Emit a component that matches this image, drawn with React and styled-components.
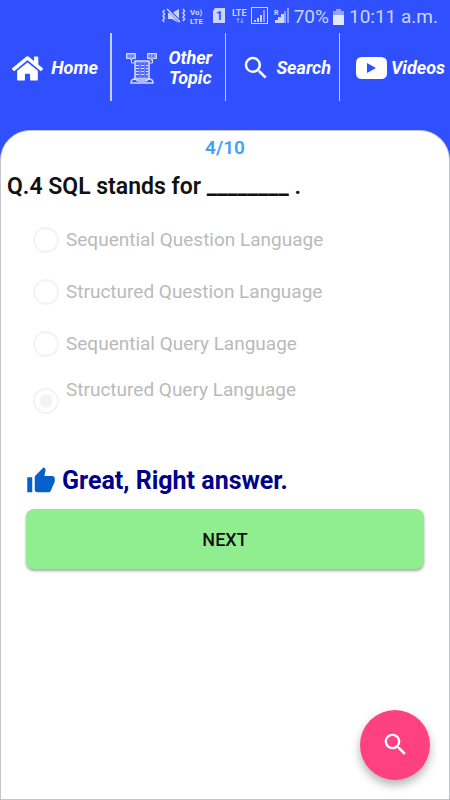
import { useState } from "react";
import styled, { createGlobalStyle } from "styled-components";
import { FaHome } from "react-icons/fa";
import { MdSearch, MdThumbUp } from "react-icons/md";

const GlobalStyle = createGlobalStyle`
  * {
    box-sizing: border-box;
  }

  body {
    margin: 0;
    background: #304ffe;
    font-family: Roboto, "Liberation Sans", sans-serif;
  }
`;

const Page = styled.div`
  display: flex;
  flex-direction: column;
  min-height: 100vh;
  background: #304ffe;
`;

const StatusBar = styled.div`
  display: flex;
  justify-content: flex-end;
  align-items: center;
  height: 33px;
  padding-right: 12px;
  color: #ccd4ff;
`;

const StatusIcons = styled.svg`
  width: 132px;
  height: 33px;
  font-family: Roboto, "Liberation Sans", sans-serif;
  font-weight: 700;
`;

const StatusText = styled.span`
  font-size: 19px;
  line-height: 33px;
  white-space: nowrap;
`;

const Battery = styled.svg`
  width: 11px;
  height: 16px;
  margin: 0 5px 0 4px;
`;

const Nav = styled.nav`
  display: grid;
  grid-template-columns: 112fr 114fr 114fr 110fr;
  height: 68px;
  margin-bottom: 29px;
`;

const NavLink = styled.a`
  display: flex;
  align-items: center;
  justify-content: flex-end;
  gap: ${({ $gap }) => $gap || 8}px;
  padding-top: 2px;
  padding-right: ${({ $end }) => $end}px;
  border-right: ${({ $line }) => $line || 0}px solid #c5ceff;
  color: #fff;
  font-size: 18px;
  font-style: italic;
  font-weight: 700;
  line-height: 20px;
  text-align: center;
  text-decoration: none;

  svg {
    flex-shrink: 0;
  }
`;

const Card = styled.main`
  flex: 1;
  display: flex;
  flex-direction: column;
  padding: 7px 0 0;
  border: 1px solid #c4c4cc;
  border-radius: 30px 30px 0 0;
  background: #fff;
`;

const Counter = styled.div`
  color: #42a0f5;
  font-size: 19px;
  font-weight: 600;
  line-height: 20px;
  text-align: center;
`;

const Question = styled.h1`
  margin: 14px 6px 0;
  color: #111;
  font-size: 23px;
  font-weight: 600;
  line-height: 30px;
`;

const Options = styled.fieldset`
  display: flex;
  flex-direction: column;
  margin: 12px 32px 0;
  padding: 0;
  border: 0;
`;

const Option = styled.label`
  display: flex;
  align-items: ${({ $raised }) => ($raised ? "flex-end" : "center")};
  gap: 7px;
  height: ${({ $raised }) => ($raised ? 44 : 52)}px;
  color: #bababa;
  font-size: 19px;
  line-height: 24px;
`;

const OptionText = styled.span`
  align-self: ${({ $raised }) => ($raised ? "flex-start" : "auto")};
  padding-top: ${({ $raised }) => ($raised ? 8 : 0)}px;
`;

const Radio = styled.input`
  appearance: none;
  flex-shrink: 0;
  width: 26px;
  height: 26px;
  margin: 0;
  border: 2px solid #f3f3f3;
  border-radius: 50%;
  background: #fff;

  &:checked {
    background: radial-gradient(circle, #f3f3f3 6px, #fff 7px);
  }
`;

const Feedback = styled.p`
  display: flex;
  align-items: center;
  gap: 6px;
  margin: 50px 25px 0;
  color: #00008b;
  font-size: 25px;
  font-weight: 700;
  line-height: 34px;

  svg {
    color: #0560cb;
  }
`;

const NextButton = styled.button`
  height: 60px;
  margin: 11px 25px 0;
  border: 0;
  border-radius: 8px;
  background: #90ee90;
  box-shadow: 0 2px 3px rgba(0, 0, 0, 0.35);
  color: #111;
  font-family: inherit;
  font-size: 18px;
  font-weight: 500;
`;

const SearchFab = styled.button`
  position: fixed;
  right: 20px;
  bottom: 20px;
  display: flex;
  align-items: center;
  justify-content: center;
  width: 70px;
  height: 70px;
  padding: 0 0 2px;
  border: 0;
  border-radius: 50%;
  background: #ff4081;
  box-shadow: 0 5px 10px rgba(0, 0, 0, 0.3);
  color: #fff;
`;

const PhoneIcons = () => (
  <StatusIcons viewBox="162 0 132 33" fill="#ccd4ff" aria-hidden="true">
    <path d="M168 13h4l7-4v14l-7-4h-4z" />
    <path d="M167 8l14 15" fill="none" stroke="#304ffe" strokeWidth="3" />
    <path
      d="M167 9l13 13M164.500 10l-1.500 2 1.500 2-1.500 2 1.500 2-1.500 2 1 2M183 9l1.500 2-1.500 2 1.500 2-1.500 2 1.500 2-1.500 2"
      fill="none"
      stroke="#ccd4ff"
      strokeWidth="1.500"
    />
    <text x="190" y="15" fontSize="8">Vo)</text>
    <text x="190" y="24" fontSize="8">LTE</text>
    <path d="M215 8h10v15h-12V11z" />
    <text x="216" y="20" fontSize="12" fill="#304ffe">1</text>
    <text x="232" y="16" fontSize="9">LTE</text>
    <path d="M238 18v5M236.500 20l1.500-2 1.500 2M242 18v5M240.500 21l1.500 2 1.500-2" fill="none" stroke="#93a3ff" />
    <rect x="251.500" y="7.500" width="16" height="16" fill="none" stroke="#ccd4ff" />
    <path d="M254 20h2v2h-2zM257 18h2v4h-2zM260 15h2v7h-2z" />
    <path d="M263 10h2v12h-2z" opacity=".6" />
    <text x="274" y="15" fontSize="7">R</text>
    <path d="M275 20h3v3h-3zM278 17h3v6h-3zM281 14h3v9h-3z" />
    <path d="M284 11h2v12h-2zM287 8h2v15h-2z" opacity=".6" />
  </StatusIcons>
);

const TopicIcon = () => (
  <svg width="32" height="32" viewBox="0 0 32 32" fill="none" stroke="#d5dcff" aria-hidden="true">
    <path
      d="M.500 1.500h9v5h-3l-1 2-2-2h-3zM21.500 1.500h9v5h-3l-2 2-1-2h-3z"
      fill="#8f9fff"
    />
    <path d="M2 4h6M23 4h6" stroke="#304ffe" strokeDasharray="2 1" />
    <path d="M5.500 8v3h3M26.500 8v3h-3" />
    <path d="M9 9h14v18H9z" fill="#6d82ff" strokeWidth="1.500" />
    <path d="M10 12h12M10 15h12M10 18h12M10 21h12M10 24h12" stroke="#304ffe" strokeDasharray="4 1 3 1" />
    <path d="M10 13.500h12M10 16.500h12M10 19.500h12M10 22.500h12" strokeDasharray="3 2" />
    <path d="M9 27c-3 0-4 1-4 4h22c0-3-1-4-4-4M9 27l3 2h8l3-2" strokeWidth="1.500" />
  </svg>
);

const VideoIcon = () => (
  <svg width="31" height="22" viewBox="0 0 31 22" aria-hidden="true">
    <path
      d="M6 0h19q6 0 6 6v10q0 6-6 6H6q-6 0-6-6V6q0-6 6-6zM11 6v10l9-5z"
      fill="#fff"
      fillRule="evenodd"
    />
  </svg>
);

const answers = [
  "Sequential Question Language",
  "Structured Question Language",
  "Sequential Query Language",
  "Structured Query Language",
];

const App = () => {
  const [selected, setSelected] = useState(3);

  return (
    <Page>
      <GlobalStyle />
      <StatusBar>
        <PhoneIcons />
        <StatusText>70%</StatusText>
        <Battery viewBox="0 0 11 16" aria-hidden="true">
          <path d="M3 0h5v2h3v4H0V2h3z" fill="#93a3ff" />
          <path d="M0 6h11v10H0z" fill="#e4e8ff" />
        </Battery>
        <StatusText>10:11 a.m.</StatusText>
      </StatusBar>
      <Nav>
        <NavLink href="#home" $end={12} $line={2}>
          <FaHome size={31} />
          Home
        </NavLink>
        <NavLink href="#topics" $end={13} $gap={10} $line={1}>
          <TopicIcon />
          <span>
            Other
            <br />
            Topic
          </span>
        </NavLink>
        <NavLink href="#search" $end={8} $gap={5} $line={1}>
          <MdSearch size={30} />
          Search
        </NavLink>
        <NavLink href="#videos" $end={5} $gap={4}>
          <VideoIcon />
          Videos
        </NavLink>
      </Nav>
      <Card>
        <Counter>4/10</Counter>
        <Question>Q.4 SQL stands for ________ .</Question>
        <Options aria-label="Answers">
          {answers.map((answer, index) => {
            const raised = index === answers.length - 1;
            return (
              <Option key={answer} $raised={raised}>
                <Radio
                  type="radio"
                  name="answer"
                  checked={selected === index}
                  onChange={() => setSelected(index)}
                />
                <OptionText $raised={raised}>{answer}</OptionText>
              </Option>
            );
          })}
        </Options>
        <Feedback>
          <MdThumbUp size={30} />
          Great, Right answer.
        </Feedback>
        <NextButton type="button">NEXT</NextButton>
      </Card>
      <SearchFab type="button" aria-label="Search">
        <MdSearch size={29} />
      </SearchFab>
    </Page>
  );
};

export default App;
